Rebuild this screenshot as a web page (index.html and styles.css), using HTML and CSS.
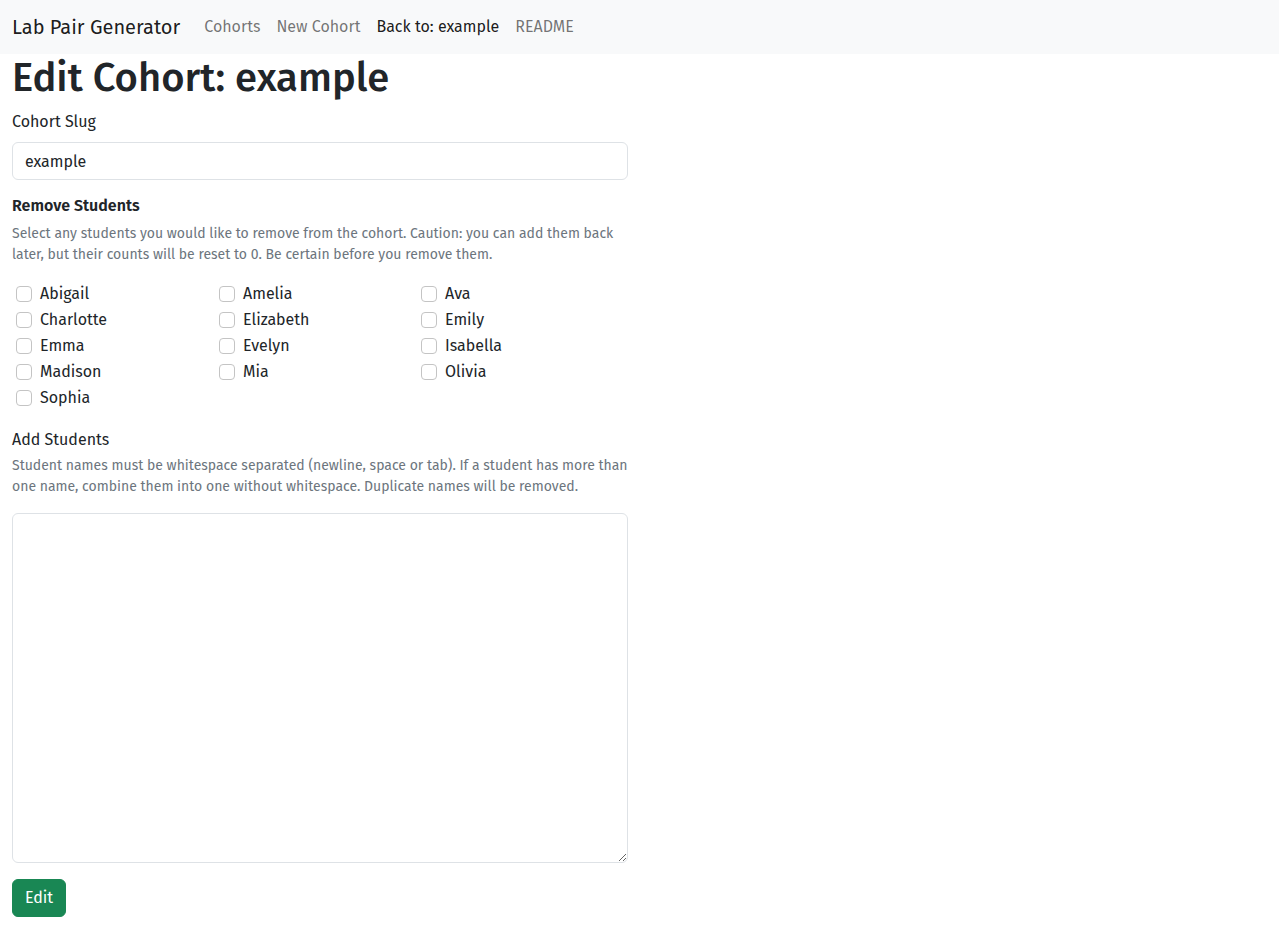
FILE: index.html
```html
<!DOCTYPE html>
<html lang="en">
<head>
<meta charset="utf-8">
<title>Edit Cohort: example</title>
<link rel="stylesheet" href="styles.css">
</head>
<body>
<nav class="navbar">
  <a class="brand" href="#">Lab Pair Generator</a>
  <ul class="nav">
    <li><a class="nav-link" href="#">Cohorts</a></li>
    <li><a class="nav-link" href="#">New Cohort</a></li>
    <li><a class="nav-link active" href="#">Back to: example</a></li>
    <li><a class="nav-link" href="#">README</a></li>
  </ul>
</nav>
<main class="container">
  <h1 class="title">Edit Cohort: example</h1>
  <form class="form">
    <div class="field field-slug">
      <label class="label" for="slug">Cohort Slug</label>
      <input class="input" id="slug" type="text" value="example">
    </div>
    <div class="field">
      <div class="label label-tight bold">Remove Students</div>
      <div class="help help-remove">Select any students you would like to remove from the cohort. Caution: you can add them back later, but their counts will be reset to 0. Be certain before you remove them.</div>
      <div class="checks">
        <label class="check"><input type="checkbox" class="box"><span>Abigail</span></label>
        <label class="check"><input type="checkbox" class="box"><span>Amelia</span></label>
        <label class="check"><input type="checkbox" class="box"><span>Ava</span></label>
        <label class="check"><input type="checkbox" class="box"><span>Charlotte</span></label>
        <label class="check"><input type="checkbox" class="box"><span>Elizabeth</span></label>
        <label class="check"><input type="checkbox" class="box"><span>Emily</span></label>
        <label class="check"><input type="checkbox" class="box"><span>Emma</span></label>
        <label class="check"><input type="checkbox" class="box"><span>Evelyn</span></label>
        <label class="check"><input type="checkbox" class="box"><span>Isabella</span></label>
        <label class="check"><input type="checkbox" class="box"><span>Madison</span></label>
        <label class="check"><input type="checkbox" class="box"><span>Mia</span></label>
        <label class="check"><input type="checkbox" class="box"><span>Olivia</span></label>
        <label class="check"><input type="checkbox" class="box"><span>Sophia</span></label>
      </div>
    </div>
    <div class="field">
      <label class="label label-tight" for="add">Add Students</label>
      <div class="help help-add">Student names must be whitespace separated (newline, space or tab). If a student has more than one name, combine them into one without whitespace. Duplicate names will be removed.</div>
      <textarea class="textarea" id="add"></textarea>
    </div>
    <button class="btn" type="button">Edit</button>
  </form>
</main>
</body>
</html>
```

FILE: styles.css
```css
* { box-sizing: border-box; }
html, body { margin: 0; padding: 0; }
body {
  font-family: "Fira Sans", Roboto, "Liberation Sans", sans-serif;
  font-size: 16px;
  line-height: 1.5;
  color: #212529;
  background: #fff;
}
.navbar {
  display: flex;
  align-items: center;
  height: 54px;
  padding: 0 12px;
  background: #f8f9fa;
}
.brand {
  font-size: 20px;
  line-height: 30px;
  color: rgba(0, 0, 0, 0.9);
  text-decoration: none;
  margin-right: 16px;
}
.nav {
  display: flex;
  list-style: none;
  margin: 0;
  padding: 0;
}
.nav-link {
  display: block;
  padding: 8px 8px;
  color: rgba(0, 0, 0, 0.55);
  text-decoration: none;
}
.nav-link.active { color: rgba(0, 0, 0, 0.9); }
.container {
  padding: 0 12px;
}
.title {
  margin: 0 0 8px;
  font-size: 40px;
  line-height: 1.2;
  font-weight: 500;
}
.form { width: 616px; }
.field { margin-bottom: 16px; }
.field-slug { margin-bottom: 14px; }
.label {
  display: block;
  margin-bottom: 8px;
}
.label-tight { margin-bottom: 0; }
.bold { font-weight: 600; }
.input {
  display: block;
  width: 100%;
  height: 38px;
  padding: 6px 12px;
  font: inherit;
  color: #212529;
  border: 1px solid #dee2e6;
  border-radius: 6px;
  background: #fff;
}
.help {
  margin-top: 4px;
  font-size: 14px;
  line-height: 21px;
  color: #6c757d;
}
.help-remove { margin-top: 5px; }
.help-add { margin-top: 3px; }
.checks {
  display: grid;
  grid-template-columns: 203px 202px 202px;
  margin: 17px 0 0 4px;
}
.check {
  display: flex;
  align-items: flex-start;
  min-height: 24px;
  margin-bottom: 2px;
}
.box {
  appearance: none;
  -webkit-appearance: none;
  width: 16px;
  height: 16px;
  margin: 4px 8px 0 0;
  border: 1px solid #c4c4c4;
  border-radius: 4px;
  background: #fff;
  flex: none;
}
.textarea {
  display: block;
  width: 100%;
  height: 350px;
  margin-top: 16px;
  padding: 6px 12px;
  font: inherit;
  border: 1px solid #dee2e6;
  border-radius: 6px;
  resize: vertical;
}
.btn {
  display: inline-block;
  height: 38px;
  padding: 6px 12px;
  font: inherit;
  color: #fff;
  background: #198754;
  border: 1px solid #198754;
  border-radius: 6px;
}
```
